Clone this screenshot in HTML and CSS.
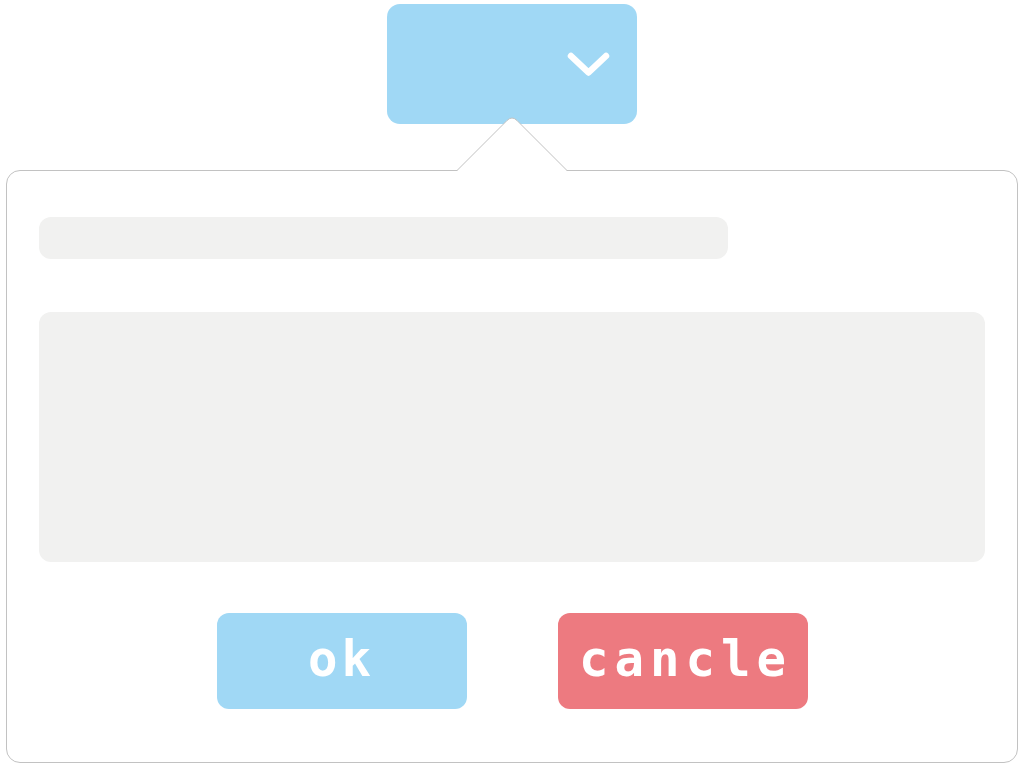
FILE: index.html
```html
<!DOCTYPE html>
<html lang="en">
<head>
<meta charset="utf-8">
<title>Popover</title>
<link rel="stylesheet" href="styles.css">
</head>
<body>
  <div class="top">
    <button class="select" type="button" aria-label="open">
      <svg class="chevron" width="44" height="28" viewBox="0 0 44 28">
        <path d="M5 6 L22.5 22.5 L40 6" fill="none" stroke="#ffffff" stroke-width="6.5" stroke-linecap="round" stroke-linejoin="round"/>
      </svg>
    </button>
  </div>
  <div class="popover">
    <svg class="arrow" width="124" height="64" viewBox="0 0 124 64">
      <path d="M7.5 62 L7.5 60.5 L57 10.5 Q62 5.5 67 10.5 L116.5 60.5 L116.5 62 Z" fill="#ffffff"/>
      <path d="M7 60.5 L57 10.5 Q62 5.5 67 10.5 L117 60.5" fill="none" stroke="#c2c2c2" stroke-width="1"/>
    </svg>
    <div class="line"></div>
    <div class="area"></div>
    <div class="actions">
      <button class="btn ok" type="button">ok</button>
      <button class="btn cancel" type="button">cancle</button>
    </div>
  </div>
</body>
</html>
```
FILE: styles.css
```css
html, body {
  margin: 0;
  padding: 0;
  background: #ffffff;
  font-family: "DejaVu Sans Mono", "Liberation Mono", monospace;
}

.top {
  display: flex;
  justify-content: center;
  padding-top: 4px;
  height: 170px;
  box-sizing: border-box;
}

.select {
  width: 250px;
  height: 120px;
  border: none;
  border-radius: 13px;
  background: #a0d8f5;
  display: flex;
  align-items: center;
  justify-content: flex-end;
  padding: 0 27px 0 0;
  margin: 0;
}

.chevron {
  display: block;
}

.popover {
  position: relative;
  margin-left: 6px;
  width: 1012px;
  height: 593px;
  box-sizing: border-box;
  border: 1px solid #c2c2c2;
  border-radius: 14px;
  padding: 46px 32px 0 32px;
  display: flex;
  flex-direction: column;
}

.arrow {
  position: absolute;
  left: 443px;
  top: -61px;
  display: block;
}

.line {
  width: 689px;
  height: 42px;
  border-radius: 12px;
  background: #f1f1f0;
}

.area {
  margin-top: 53px;
  width: 946px;
  height: 250px;
  border-radius: 12px;
  background: #f1f1f0;
}

.actions {
  margin-top: 51px;
  display: flex;
  justify-content: center;
  gap: 91px;
}

.btn {
  width: 250px;
  height: 96px;
  border: none;
  border-radius: 12px;
  margin: 0;
  padding: 0 0 4px 0;
  box-sizing: border-box;
  color: #ffffff;
  font-family: "DejaVu Sans Mono", "Liberation Mono", monospace;
  font-weight: bold;
  font-size: 49px;
  line-height: 1;
  letter-spacing: 6px;
  text-indent: 6px;
  display: flex;
  align-items: center;
  justify-content: center;
}

.ok {
  background: #a0d8f5;
  letter-spacing: 4px;
  text-indent: 0;
}

.cancel {
  background: #ed7a80;
}
```
